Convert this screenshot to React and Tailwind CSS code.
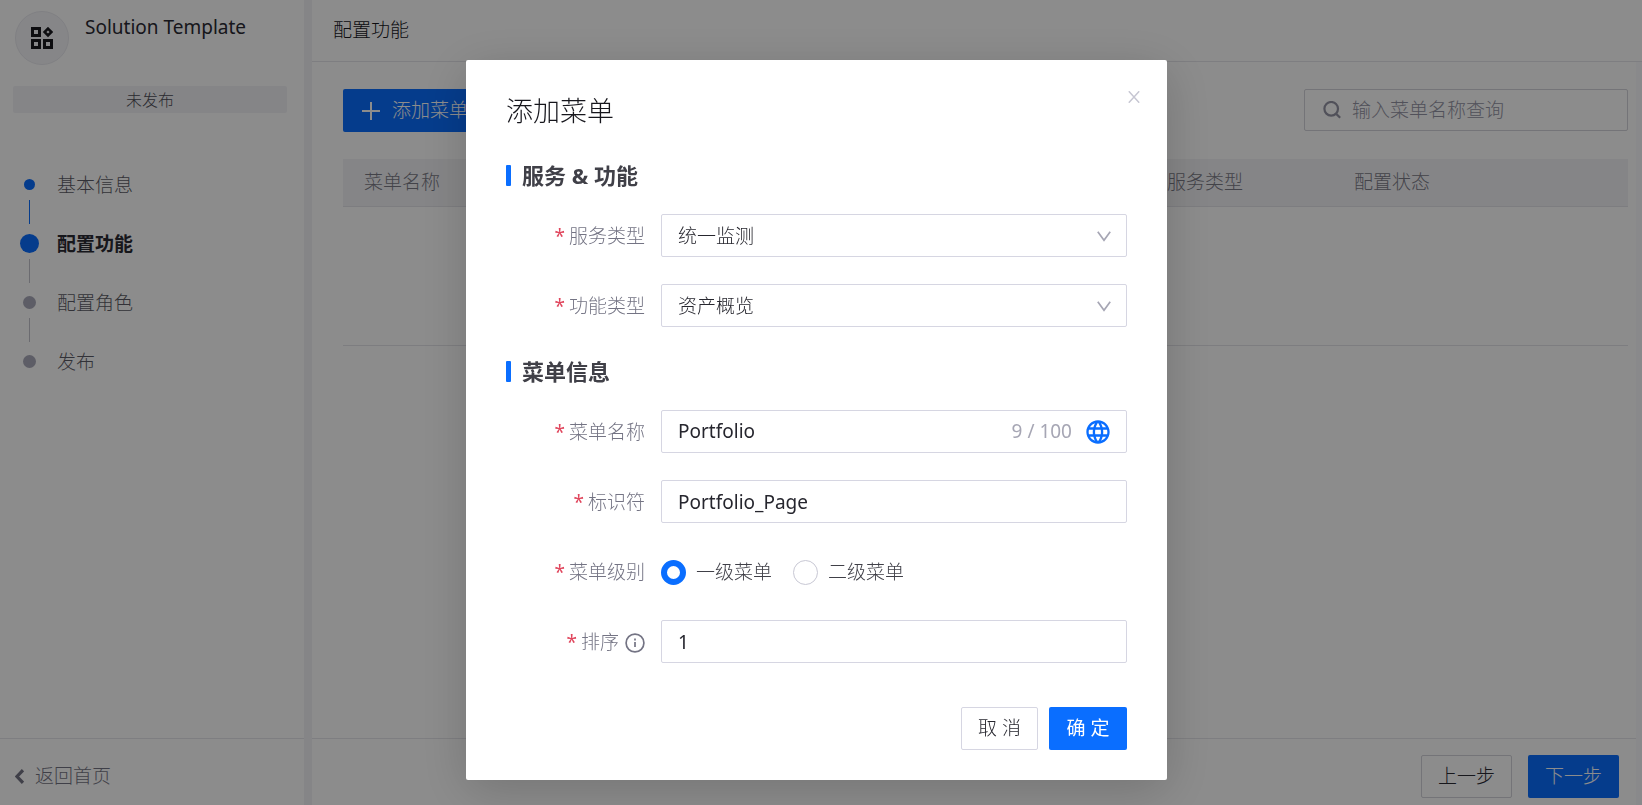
import React, { useState } from 'react';
import { MdLanguage } from 'react-icons/md';

const steps = [
  { name: '基本信息', dot: 'size-[11px] bg-[#0a6eff]', line: 'bg-[#0a6eff]', text: 'text-[#5c5c66]' },
  { name: '配置功能', dot: 'size-[19px] bg-[#0a6eff]', line: 'bg-[#c4c4cc]', text: 'font-bold text-[#2a2a33]' },
  { name: '配置角色', dot: 'size-[13px] bg-[#aaaaba]', line: 'bg-[#c4c4cc]', text: 'text-[#5c5c66]' },
  { name: '发布', dot: 'size-[13px] bg-[#aaaaba]', text: 'text-[#5c5c66]' },
];

const fieldClass =
  'h-[43px] w-full rounded-xs border border-[#d6d6e2] bg-white px-4 text-[#26262e] outline-none focus:border-[#0a6eff]';

const LogoIcon = () => (
  <svg width="22" height="22" viewBox="0 0 22 22" fill="none" stroke="currentColor" strokeWidth="3">
    <path d="M1.5 1.5h7v7h-7zM1.5 13.5h7v7h-7zM13.5 13.5h7v7h-7z" />
    <path d="M17 1.6 20.4 5 17 8.4 13.6 5z" strokeWidth="2.6" />
  </svg>
);

const SectionTitle = ({ children, className }) => (
  <h3 className={`flex h-[30px] items-center text-[22px] font-bold text-[#404048] ${className}`}>
    <span className="mr-[11px] h-[21px] w-[5px] rounded-[1px] bg-[#0a6eff]" />
    {children}
  </h3>
);

const FormRow = ({ label, htmlFor, extra, children }) => (
  <div className="flex h-[43px] items-center">
    <label htmlFor={htmlFor} className="mr-4 flex w-[139px] shrink-0 items-center justify-end pt-[2px] text-[#747484]">
      <span className="mr-1 font-normal text-[#e0455c]">*</span>
      {label}
      {extra}
    </label>
    {children}
  </div>
);

const SelectField = ({ id, options }) => (
  <div className="relative flex-1">
    <select id={id} className={`${fieldClass} appearance-none pt-[2px]`}>
      {options.map((o) => (
        <option key={o}>{o}</option>
      ))}
    </select>
    <svg
      className="pointer-events-none absolute top-[17px] right-4 text-[#a6a6b4]"
      width="14" height="11" viewBox="0 0 14 11" fill="none" stroke="currentColor" strokeWidth="1.7"
    >
      <path d="M.8.7 7 9.2 13.2.7" />
    </svg>
  </div>
);

const Sidebar = () => (
  <aside className="flex w-[304px] shrink-0 flex-col bg-white">
    <div className="flex gap-4 px-[15px] pt-[11px]">
      <div className="flex size-[54px] items-center justify-center rounded-full border border-[#e9e9ef] bg-[#f5f5f8] text-[#1a1a20]">
        <LogoIcon />
      </div>
      <h1 className="mt-[3px] leading-[26px] font-normal text-[#2a2a33]">Solution Template</h1>
    </div>
    <div className="mt-[21px] mr-[17px] ml-[13px] flex h-[27px] items-center justify-center rounded-xs bg-[#f3f3f6] text-base text-[#4c4c56]">
      未发布
    </div>

    <ol className="mt-[62px] ml-5">
      {steps.map((step) => (
        <li key={step.name} className="flex h-[59px]">
          <div className="flex w-[19px] flex-col items-center">
            <div className="flex h-[19px] items-center">
              <span className={`rounded-full ${step.dot}`} />
            </div>
            {step.line && <span className={`mt-[6px] h-6 w-px ${step.line}`} />}
          </div>
          <span className={`ml-[18px] leading-[20px] ${step.text}`}>{step.name}</span>
        </li>
      ))}
    </ol>

    <div className="mt-auto flex h-[67px] items-center border-t border-[#e6e6eb] px-[15px] pt-2">
      <a href="#home" className="flex items-center gap-[11px] text-[#747484]">
        <svg width="9" height="15" viewBox="0 0 9 15" fill="none" stroke="currentColor" strokeWidth="3.2">
          <path d="M8 1.2 2 7.5 8 13.8" />
        </svg>
        返回首页
      </a>
    </div>
  </aside>
);

const MainPanel = () => (
  <main className="flex min-w-0 flex-1 flex-col bg-white">
    <header className="flex h-[62px] items-center border-b border-[#e6e6eb] px-[21px]">
      <h2 className="text-[#16161c]">配置功能</h2>
    </header>

    <div className="flex flex-1 flex-col border-r-6 border-[#fafafd]">
      <div className="flex-1 pt-[27px] pr-2 pl-[31px]">
        <div className="flex items-start justify-between">
          <button className="flex h-[43px] items-center gap-3 rounded-xs bg-[#0a6eff] px-[19px] text-white">
            <svg width="18" height="18" viewBox="0 0 18 18" stroke="currentColor" strokeWidth="2">
              <path d="M9 0v18M0 9h18" />
            </svg>
            添加菜单
          </button>
          <label className="flex h-[42px] w-[324px] items-center gap-[11px] rounded-xs border border-[#d3d3da] pl-[18px] text-[#9494a4]">
            <svg width="18" height="18" viewBox="0 0 18 18" fill="none" stroke="currentColor" strokeWidth="2.2">
              <circle cx="8.2" cy="7.8" r="6.8" />
              <path d="m12.6 12.4 4.6 4.4" />
            </svg>
            <input
              aria-label="菜单名称"
              className="min-w-0 flex-1 bg-transparent outline-none placeholder:text-[#9494a4]"
              placeholder="输入菜单名称查询"
            />
          </label>
        </div>

        <table className="mt-[27px] w-full table-fixed text-left">
          <thead>
            <tr className="h-[47px] border-b border-[#e4e4e9] bg-[#f3f3f6] text-[#7a7a86]">
              <th className="pl-[21px] font-light">菜单名称</th>
              <th className="w-[187px] pl-[21px] font-light">服务类型</th>
              <th className="w-[295px] pl-[21px] font-light">配置状态</th>
            </tr>
          </thead>
          <tbody>
            <tr className="h-[139px] border-b border-[#e4e4e9]">
              <td colSpan={3} />
            </tr>
          </tbody>
        </table>
      </div>

      <footer className="flex h-[67px] items-center justify-end gap-4 border-t border-[#e6e6eb] pt-[8px] pr-[17px]">
        <button className="h-[43px] rounded-xs border border-[#d3d3da] px-4 text-[#2a2a33]">上一步</button>
        <button className="h-[43px] rounded-xs bg-[#0a6eff] px-[17px] text-white">下一步</button>
      </footer>
    </div>
  </main>
);

const AddMenuDialog = () => {
  const [name, setName] = useState('Portfolio');
  const [level, setLevel] = useState('一级菜单');

  return (
    <div className="fixed inset-0 flex items-start justify-center bg-black/45 pt-[60px] pr-[9px]">
      <div
        role="dialog"
        aria-labelledby="dialog-title"
        className="relative w-[701px] rounded-xs bg-white px-10 pt-9 pb-[30px] shadow-[0_10px_50px_rgba(0,0,0,0.18)]"
      >
        <button aria-label="关闭" className="absolute top-[31px] right-[27px] text-[#c6c6d2]">
          <svg width="12" height="12" viewBox="0 0 12 12" fill="none" stroke="currentColor" strokeWidth="1.5">
            <path d="m.8.3 10.4 11.4M11.2.3.8 11.7" />
          </svg>
        </button>
        <h2 id="dialog-title" className="text-[27px] leading-[30px] text-[#16161c]">添加菜单</h2>

        <SectionTitle className="mt-[34px]">服务 &amp; 功能</SectionTitle>
        <div className="mt-6 flex flex-col gap-[27px]">
          <FormRow label="服务类型" htmlFor="service">
            <SelectField id="service" options={['统一监测']} />
          </FormRow>
          <FormRow label="功能类型" htmlFor="feature">
            <SelectField id="feature" options={['资产概览']} />
          </FormRow>
        </div>

        <SectionTitle className="mt-[29px]">菜单信息</SectionTitle>
        <div className="mt-6 flex flex-col gap-[27px]">
          <FormRow label="菜单名称" htmlFor="menu-name">
            <div className={`${fieldClass} flex items-center font-normal`}>
              <input
                id="menu-name"
                className="min-w-0 flex-1 outline-none"
                value={name}
                maxLength={100}
                onChange={(e) => setName(e.target.value)}
              />
              <span className="text-[#a6a6b4]">{name.length} / 100</span>
              <button aria-label="多语言" className="-mr-[2px] ml-3 text-[#0a6eff]">
                <MdLanguage size={28} />
              </button>
            </div>
          </FormRow>
          <FormRow label="标识符" htmlFor="identifier">
            <input id="identifier" className={`${fieldClass} font-normal`} defaultValue="Portfolio_Page" />
          </FormRow>
          <FormRow label="菜单级别">
            <div className="flex gap-[21px] pt-[2px]">
              {['一级菜单', '二级菜单'].map((item) => (
                <label key={item} className="flex items-center gap-[10px] text-[#404048]">
                  <input
                    type="radio"
                    name="level"
                    className="size-[25px] appearance-none rounded-full border border-[#c8c8d4] checked:border-6 checked:border-[#0a6eff]"
                    checked={level === item}
                    onChange={() => setLevel(item)}
                  />
                  {item}
                </label>
              ))}
            </div>
          </FormRow>
          <FormRow
            label="排序"
            htmlFor="order"
            extra={
              <svg className="ml-[6px]" width="20" height="20" viewBox="0 0 20 20" fill="none" stroke="currentColor" strokeWidth="1.7">
                <circle cx="10" cy="10" r="8.9" />
                <path d="M10 9v5M10 5.6v1.8" />
              </svg>
            }
          >
            <input id="order" className={`${fieldClass} font-normal`} defaultValue="1" />
          </FormRow>
        </div>

        <div className="mt-11 flex justify-end gap-[11px]">
          <button className="h-[43px] min-w-[77px] rounded-xs border border-[#d6d6e2] px-4 text-[#26262e]">取 消</button>
          <button className="h-[43px] min-w-[78px] rounded-xs bg-[#0a6eff] px-4 font-normal text-white">确 定</button>
        </div>
      </div>
    </div>
  );
};

export default function App() {
  return (
    <div className="flex min-h-screen gap-2 bg-[#f3f3f6] font-['Noto_Sans','Noto_Sans_CJK_SC',sans-serif] text-[19px] font-light">
      <Sidebar />
      <MainPanel />
      <AddMenuDialog />
    </div>
  );
}
